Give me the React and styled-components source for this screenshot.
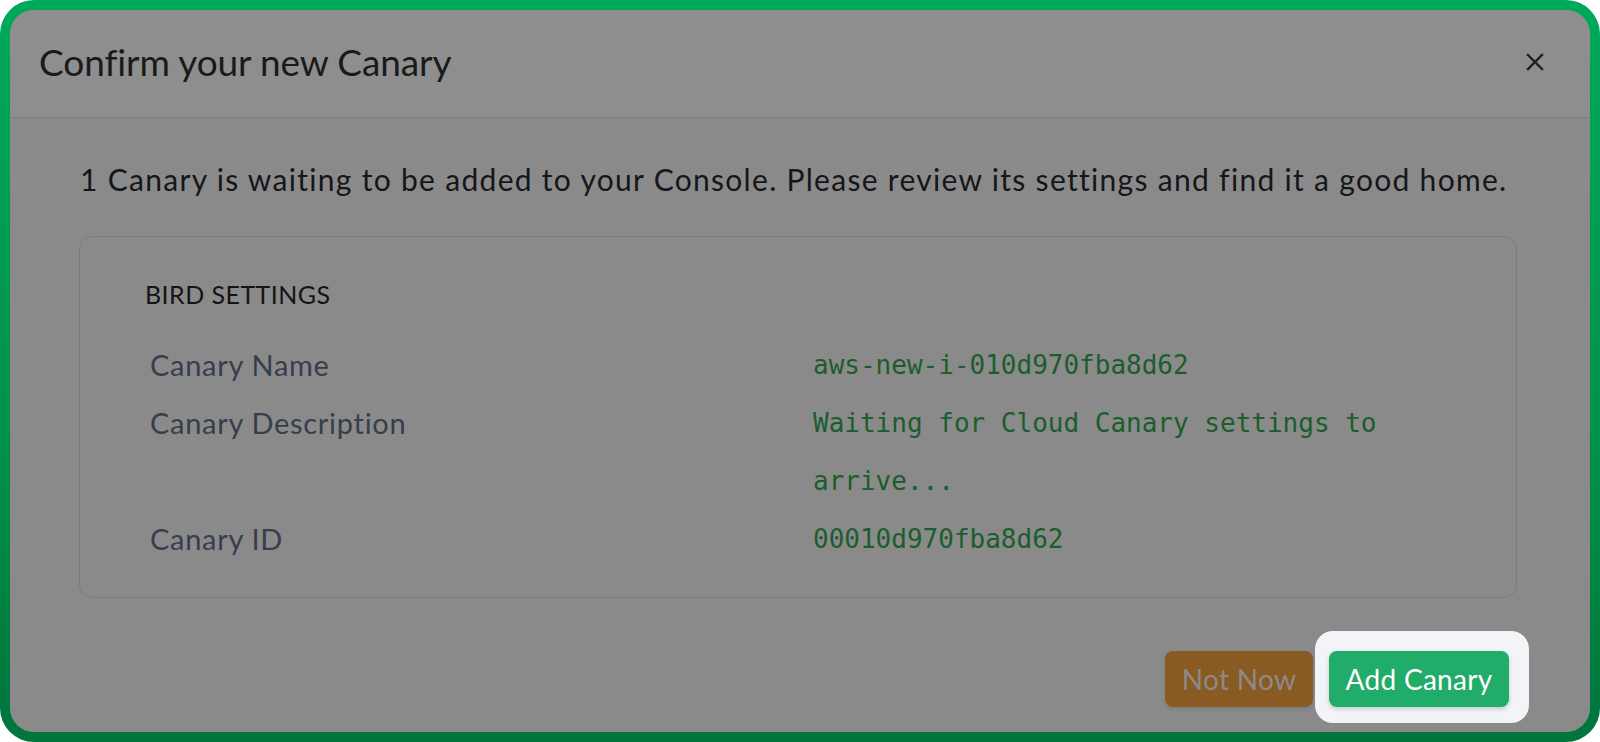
import React from "react";
import styled, { createGlobalStyle } from "styled-components";

const Global = createGlobalStyle`
  html, body { margin: 0; padding: 0; background: #ffffff; }
  * { box-sizing: border-box; }
`;

const Frame = styled.div`
  width: 1600px;
  height: 742px;
  padding: 10px;
  border-radius: 34px;
  background: linear-gradient(180deg, #00a85b 0%, #009149 60%, #00743d 100%);
`;

const Modal = styled.div`
  height: 100%;
  border-radius: 24px;
  overflow: hidden;
  background: #8a8a8b;
  display: flex;
  flex-direction: column;
  font-family: Lato, "Noto Sans", sans-serif;
`;

const Header = styled.div`
  height: 109px;
  flex: none;
  display: flex;
  align-items: center;
  justify-content: space-between;
  padding: 0 46px 4px 29px;
  background: #8e8e8e;
  border-bottom: 2px solid #858585;
`;

const Title = styled.h1`
  margin: 0;
  font-size: 37px;
  font-weight: 400;
  color: #1a1a1a;
  letter-spacing: -0.1px;
`;

const Close = styled.button`
  border: 0;
  background: none;
  padding: 0;
  width: 18px;
  height: 18px;
  display: flex;
  color: #1f1f1f;
  margin-top: 0;
`;

const Body = styled.div`
  flex: 1;
  padding: 40px 61px 0 70px;
  display: flex;
  flex-direction: column;
`;

const Intro = styled.p`
  margin: 0 0 37px;
  font-size: 30px;
  line-height: 40px;
  letter-spacing: 1.3px;
  color: #15161a;
  white-space: nowrap;
`;

const Box = styled.div`
  margin-left: -1px;
  width: 1438px;
  height: 362px;
  border: 1.5px solid #738274;
  border-radius: 13px;
  padding: 42px 0 0 65px;
`;

const SectionTitle = styled.div`
  font-size: 25px;
  line-height: 30px;
  letter-spacing: 0.45px;
  color: #141414;
  margin-bottom: 27px;
`;

const Grid = styled.div`
  display: grid;
  grid-template-columns: 663px 640px;
  padding-left: 5px;
`;

const Label = styled.div`
  font-size: 29px;
  line-height: 58px;
  letter-spacing: 0.7px;
  color: #373e4b;
`;

const Value = styled.div`
  font-family: "DejaVu Sans Mono", "Liberation Mono", monospace;
  font-size: 26px;
  line-height: 58px;
  color: #1b5d2b;
`;

const Footer = styled.div`
  margin-top: 33px;
  display: flex;
  justify-content: flex-end;
  align-items: flex-start;
  gap: 2px;
`;

const Button = styled.button`
  height: 56px;
  border: 0;
  border-radius: 8px;
  font-family: Lato, "Noto Sans", sans-serif;
  font-size: 28px;
  letter-spacing: 0.3px;
  padding: 0;
  width: ${(p) => p.$w}px;
  background: ${(p) => (p.$primary ? "#21ac6a" : "#8a5a23")};
  color: ${(p) => (p.$primary ? "#ffffff" : "#8d8a86")};
  box-shadow: 0 2px 5px rgba(0, 0, 0, ${(p) => (p.$primary ? 0.18 : 0.1)});
  margin-top: ${(p) => (p.$offset ? 20 : 0)}px;
`;

const Spotlight = styled.div`
  padding: 20px 20px 16px 14px;
  background: #f3f4f8;
  border-radius: 18px;
`;

const rows = [
  ["Canary Name", "aws-new-i-010d970fba8d62"],
  ["Canary Description", "Waiting for Cloud Canary settings to arrive..."],
  ["Canary ID", "00010d970fba8d62"],
];

export default function App() {
  return (
    <>
      <Global />
      <Frame>
        <Modal>
          <Header>
            <Title>Confirm your new Canary</Title>
            <Close aria-label="Close">
              <svg width="18" height="18" viewBox="0 0 18 18">
                <path d="M2 2 L16 16 M16 2 L2 16" stroke="currentColor" strokeWidth="2.4" strokeLinecap="square" />
              </svg>
            </Close>
          </Header>
          <Body>
            <Intro>
              1 Canary is waiting to be added to your Console. Please review its settings and find it a good home.
            </Intro>
            <Box>
              <SectionTitle>BIRD SETTINGS</SectionTitle>
              <Grid>
                {rows.map(([l, v]) => (
                  <React.Fragment key={l}>
                    <Label>{l}</Label>
                    <Value>{v}</Value>
                  </React.Fragment>
                ))}
              </Grid>
            </Box>
            <Footer>
              <Button $w={148} $offset>Not Now</Button>
              <Spotlight>
                <Button $w={180} $primary>Add Canary</Button>
              </Spotlight>
            </Footer>
          </Body>
        </Modal>
      </Frame>
    </>
  );
}
